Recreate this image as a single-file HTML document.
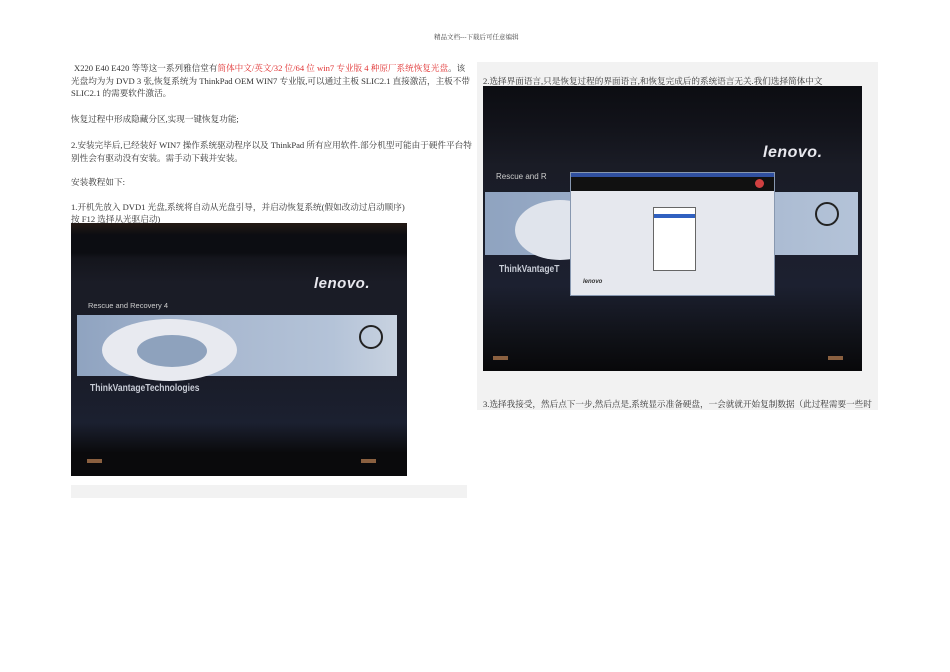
<!DOCTYPE html>
<html><head><meta charset="utf-8"><style>
body{margin:0;width:950px;height:672px;background:#fff;position:relative;overflow:hidden;font-family:"Liberation Serif","Noto Serif CJK SC",serif;font-size:8.6px;color:#333}
.a{position:absolute;white-space:nowrap;line-height:12px}
.r{color:#e03030}
.scr{position:absolute;background:#0e0f14;overflow:hidden}
</style></head><body>
<div class="a" style="left:434px;top:32px;font-size:6.5px;color:#444">精品文档---下载后可任意编辑</div>

<div class="a" style="left:74px;top:62px">X220 E40 E420 等等这一系列雅信堂有<span class="r">简体中文/英文/32 位/64 位 win7 专业版 4 种原厂系统恢复光盘</span>。该</div>
<div class="a" style="left:71px;top:74.5px">光盘均为为 DVD 3 张,恢复系统为 ThinkPad OEM WIN7 专业版,可以通过主板 SLIC2.1 直接激活，主板不带</div>
<div class="a" style="left:71px;top:87px">SLIC2.1 的需要软件激活。</div>
<div class="a" style="left:71px;top:113px">恢复过程中形成隐藏分区,实现一键恢复功能;</div>
<div class="a" style="left:71px;top:139px">2.安装完毕后,已经装好 WIN7 操作系统驱动程序以及 ThinkPad 所有应用软件.部分机型可能由于硬件平台特</div>
<div class="a" style="left:71px;top:151.5px">别性会有驱动没有安装。需手动下载并安装。</div>
<div class="a" style="left:71px;top:176px">安装教程如下:</div>
<div class="a" style="left:71px;top:201px">1.开机先放入 DVD1 光盘,系统将自动从光盘引导，并启动恢复系统(假如改动过启动顺序)</div>
<div class="a" style="left:71px;top:213px">按 F12 选择从光驱启动)</div>

<div class="scr" style="left:71px;top:223px;width:336px;height:253px;background:linear-gradient(#241a14 0,#0c0d12 12px,#0c0d12 30px,#14151c 35px,#1a1c26 60px,#1a1c28 150px,#1b2030 200px,#0a0a0c 230px)">
 <div style="position:absolute;left:243px;top:52px;color:#e8e8ee;font:italic bold 15px 'Liberation Sans',sans-serif;letter-spacing:0.5px">lenovo.</div>
 <div style="position:absolute;left:17px;top:78px;color:#ccc;font:7.5px 'Liberation Sans',sans-serif">Rescue and Recovery 4</div>
 <div style="position:absolute;left:6px;top:92px;width:320px;height:61px;background:linear-gradient(90deg,#8fa3c0,#a7b7cf 40%,#b4c3d8 80%,#c8d2e0)">
  <div style="position:absolute;left:25px;top:4px;width:135px;height:62px;border-radius:50%;background:#e8eaf0"></div>
  <div style="position:absolute;left:60px;top:20px;width:70px;height:32px;border-radius:50%;background:#8ea2bd"></div>
  <div style="position:absolute;left:282px;top:10px;width:20px;height:20px;border-radius:50%;border:2px solid #222"></div>
 </div>
 <div style="position:absolute;left:19px;top:160px;color:#c8ccd6;font:bold 10px 'Liberation Sans Narrow','Liberation Sans',sans-serif;transform:scaleX(0.85);transform-origin:left">ThinkVantageTechnologies</div>
 <div style="position:absolute;left:16px;top:236px;width:15px;height:4px;background:#8a6040"></div>
 <div style="position:absolute;left:290px;top:236px;width:15px;height:4px;background:#8a6040"></div>
</div>
<div style="position:absolute;left:71px;top:485px;width:396px;height:13px;background:#f2f2f2"></div>

<div style="position:absolute;left:477px;top:62px;width:401px;height:348px;background:#f2f2f2"></div>
<div class="a" style="left:483px;top:75px">2.选择界面语言,只是恢复过程的界面语言,和恢复完成后的系统语言无关.我们选择简体中文</div>
<div class="scr" style="left:483px;top:86px;width:379px;height:285px;background:linear-gradient(#0c0d12 0,#12131a 40px,#1a1c26 80px,#1c2030 200px,#101218 250px,#08080a 285px)">
 <div style="position:absolute;left:280px;top:58px;color:#e8e8ee;font:italic bold 16px 'Liberation Sans',sans-serif;letter-spacing:0.5px">lenovo.</div>
 <div style="position:absolute;left:13px;top:86px;color:#ccc;font:8px 'Liberation Sans',sans-serif">Rescue and R</div>
 <div style="position:absolute;left:2px;top:106px;width:373px;height:63px;background:linear-gradient(90deg,#8fa3c0,#b4c3d8)">
  <div style="position:absolute;left:30px;top:8px;width:90px;height:60px;border-radius:50%;background:#e0e4ec"></div>
  <div style="position:absolute;left:330px;top:10px;width:20px;height:20px;border-radius:50%;border:2px solid #222"></div>
 </div>
 <div style="position:absolute;left:16px;top:178px;color:#c8ccd6;font:bold 10px 'Liberation Sans',sans-serif;transform:scaleX(0.85);transform-origin:left">ThinkVantageT</div>
 <div style="position:absolute;left:87px;top:86px;width:203px;height:122px;background:#e6e8ee;border:1px solid #8898b0">
  <div style="height:4px;background:#3050a0"></div>
  <div style="height:14px;background:#111;position:relative"><div style="position:absolute;right:10px;top:2px;width:9px;height:9px;border-radius:50%;background:#d04040"></div></div>
  <div style="position:absolute;left:82px;top:34px;width:41px;height:62px;background:#fff;border:1px solid #666"><div style="margin-top:6px;height:4px;background:#3060c0"></div></div>
  <div style="position:absolute;left:12px;top:106px;color:#333;font:italic bold 6px 'Liberation Sans',sans-serif">lenovo</div>
 </div>
 <div style="position:absolute;left:10px;top:270px;width:15px;height:4px;background:#8a6040"></div>
 <div style="position:absolute;left:345px;top:270px;width:15px;height:4px;background:#8a6040"></div>
</div>
<div class="a" style="left:483px;top:398px">3.选择我接受，然后点下一步,然后点是,系统显示准备硬盘，一会就就开始复制数据（此过程需要一些时</div>
</body></html>
